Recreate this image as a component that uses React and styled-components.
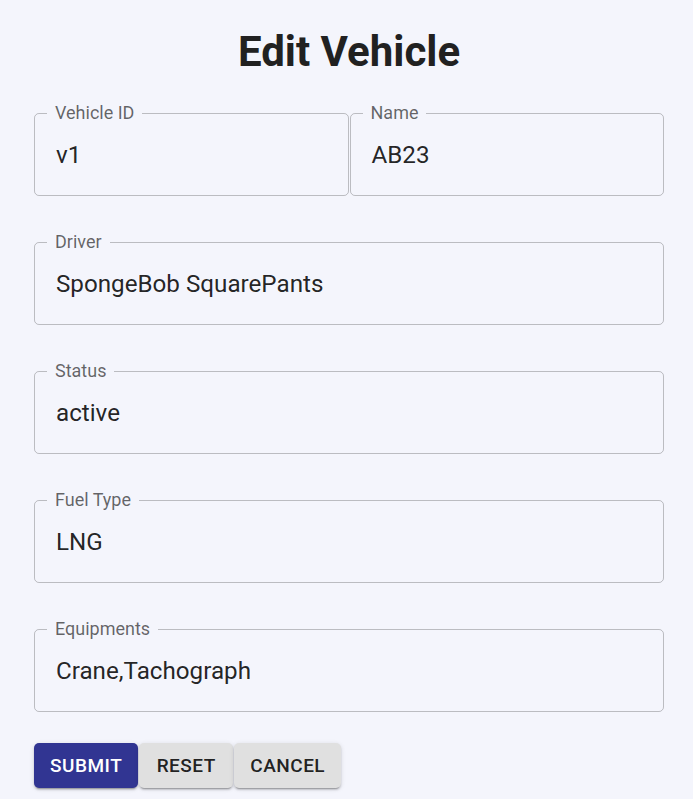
import React from "react";
import styled, { createGlobalStyle } from "styled-components";

const Global = createGlobalStyle`
  html, body { margin: 0; padding: 0; background: #f4f5fc; }
  body { font-family: Roboto, "Liberation Sans", sans-serif; }
`;

const Page = styled.main`
  box-sizing: border-box;
  width: 693px;
  min-height: 799px;
  padding: 27px 29px 0 34px;
  background: #f4f5fc;
`;

const Title = styled.h1`
  margin: 0 0 27px;
  font-size: 42px;
  line-height: 50px;
  font-weight: 700;
  color: #212121;
  text-align: center;
`;

const Form = styled.form`
  display: flex;
  flex-direction: column;
  gap: 37px;
`;

const Row = styled.div`
  display: grid;
  grid-template-columns: 1fr 1fr;
  gap: 1px;
`;

const Field = styled.fieldset`
  margin: 0;
  min-width: 0;
  padding: 0 20px 0 12px;
  border: 1px solid rgba(0, 0, 0, 0.23);
  border-radius: 5px;
`;

const Label = styled.legend`
  padding: 0 8px;
  margin-left: 0;
  font-size: 18px;
  line-height: 18px;
  color: rgba(0, 0, 0, 0.6);
`;

const Value = styled.div`
  padding: 17px 0 24px 9px;
  font-size: 24.2px;
  line-height: 32px;
  color: rgba(0, 0, 0, 0.87);
  white-space: nowrap;
  overflow: hidden;
`;

const Actions = styled.div`
  display: flex;
  gap: 1px;
  margin-top: -6px;
`;

const Button = styled.button`
  height: 45px;
  min-width: 94px;
  padding: 0 16px;
  border: none;
  border-radius: 5px;
  font-family: Roboto, "Liberation Sans", sans-serif;
  font-size: 19px;
  font-weight: 500;
  letter-spacing: 0.5px;
  text-transform: uppercase;
  cursor: pointer;
  background: ${(p) => (p.$primary ? "#313592" : "#e0e0e0")};
  color: ${(p) => (p.$primary ? "#ffffff" : "rgba(0, 0, 0, 0.87)")};
  box-shadow: 0px 3px 1px -2px rgba(0, 0, 0, 0.2),
    0px 2px 2px 0px rgba(0, 0, 0, 0.14), 0px 1px 5px 0px rgba(0, 0, 0, 0.12);
`;

function OutlinedField({ label, value }) {
  return (
    <Field>
      <Label>{label}</Label>
      <Value>{value}</Value>
    </Field>
  );
}

export default function App() {
  return (
    <>
      <Global />
      <Page>
        <Title>Edit Vehicle</Title>
        <Form onSubmit={(e) => e.preventDefault()}>
          <Row>
            <OutlinedField label="Vehicle ID" value="v1" />
            <OutlinedField label="Name" value="AB23" />
          </Row>
          <OutlinedField label="Driver" value="SpongeBob SquarePants" />
          <OutlinedField label="Status" value="active" />
          <OutlinedField label="Fuel Type" value="LNG" />
          <OutlinedField label="Equipments" value="Crane,Tachograph" />
          <Actions>
            <Button type="submit" $primary>Submit</Button>
            <Button type="button">Reset</Button>
            <Button type="button">Cancel</Button>
          </Actions>
        </Form>
      </Page>
    </>
  );
}
